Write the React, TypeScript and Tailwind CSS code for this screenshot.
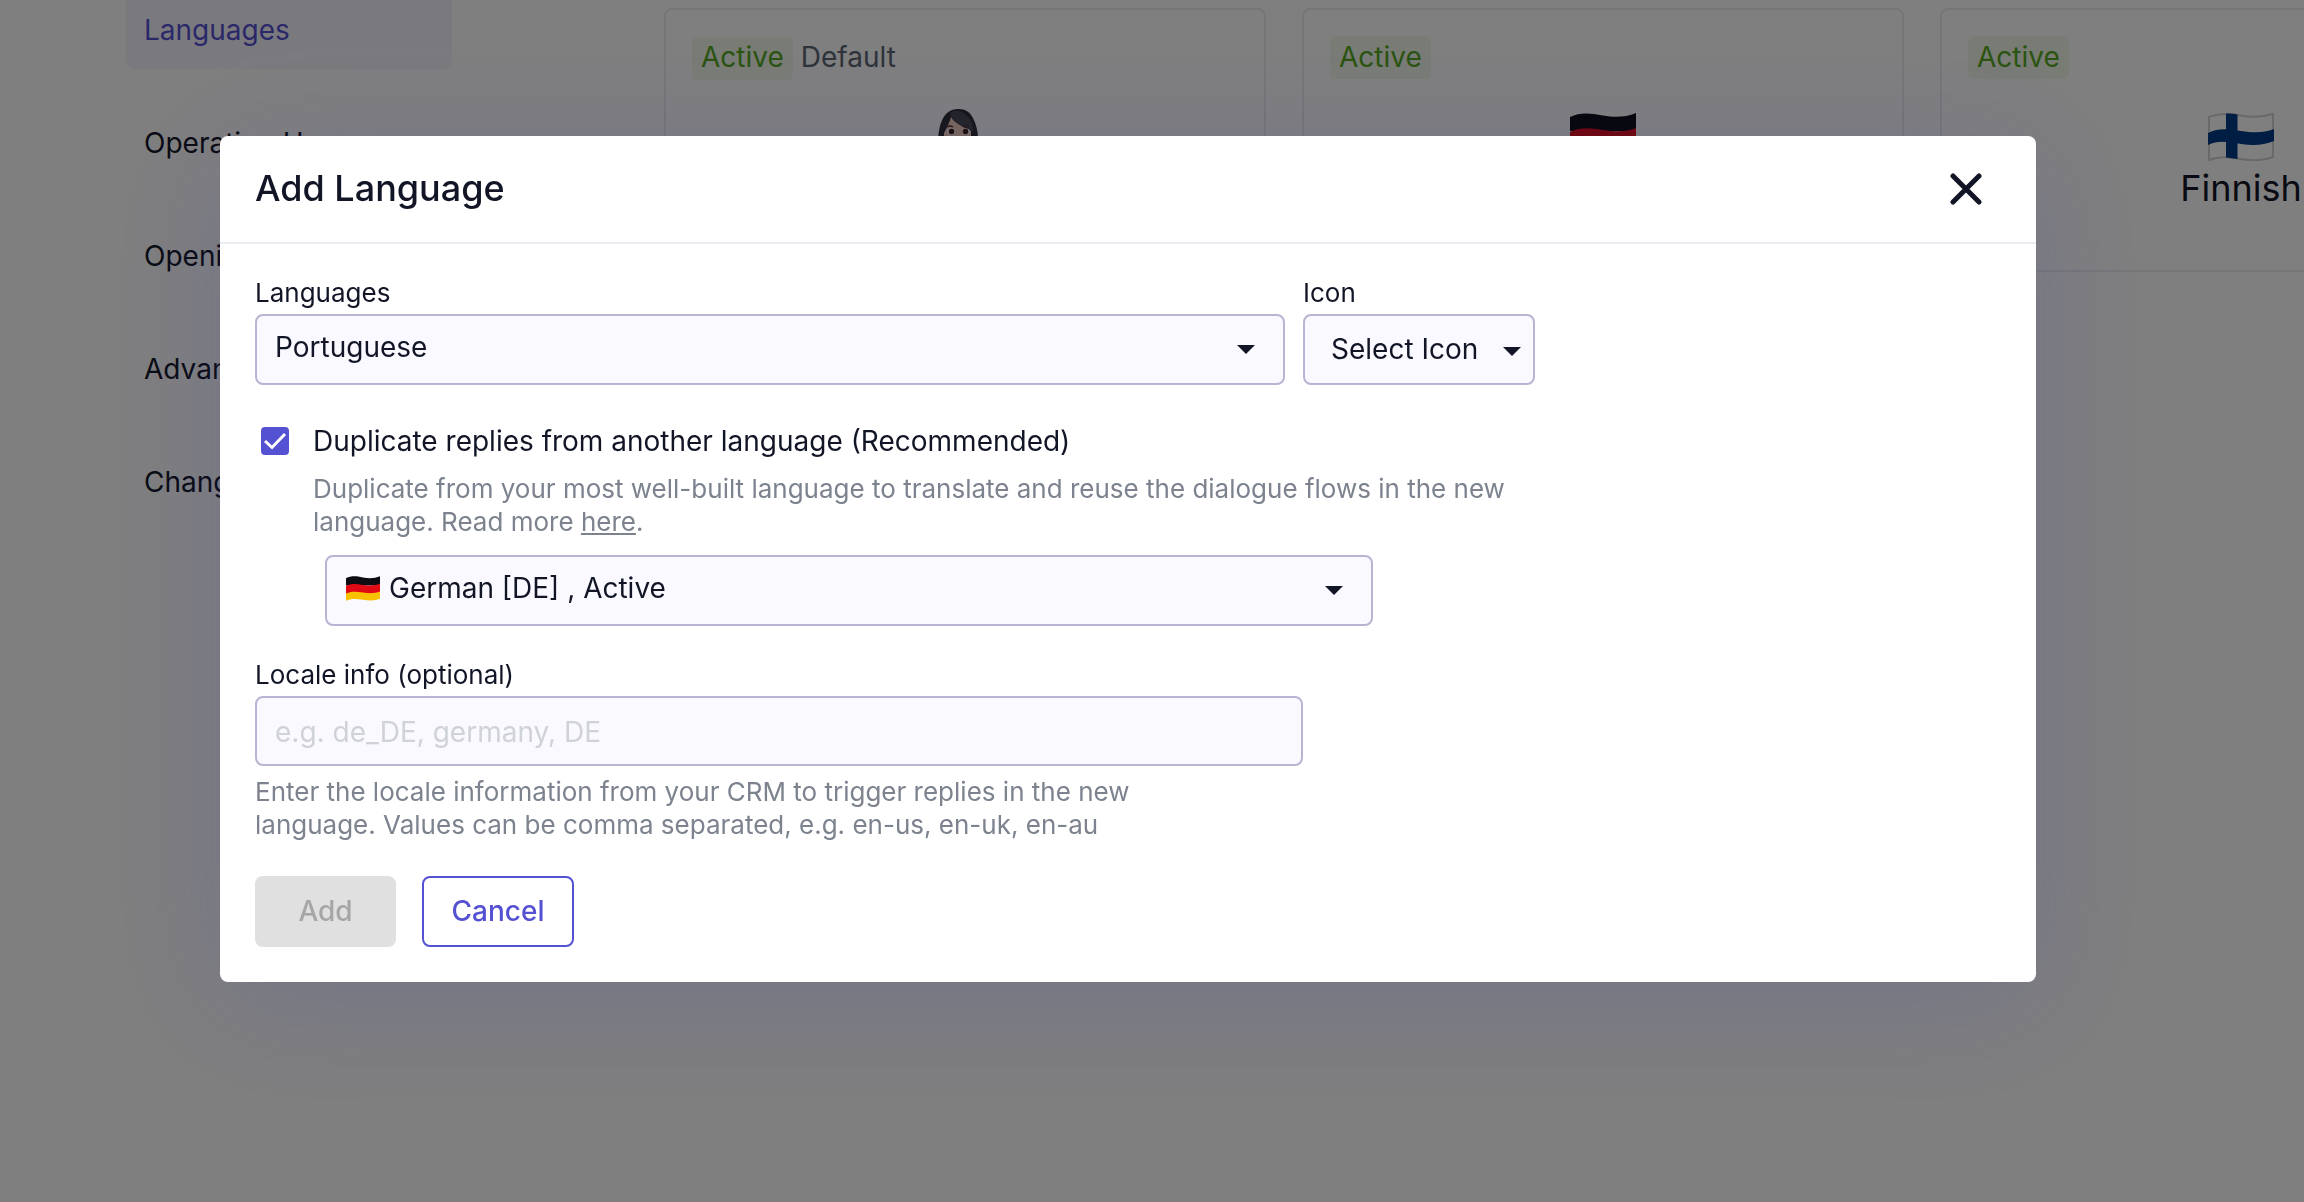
import { useState } from "react";

const NAV_ITEMS = ["Languages", "Operating Hours", "Opening Hours", "Advanced", "Change Log"];

const CARDS = [
    { name: "English", icon: "woman", isDefault: true },
    { name: "German", icon: "de", isDefault: false },
    { name: "Finnish", icon: "fi", isDefault: false },
];

const FIELD = "w-full border-2 border-[#b7b5d3] rounded-lg bg-[#faf9ff] text-[28px] text-[#121526] outline-none";

function GermanFlag({ className }: { className: string }) {
    return (
        <svg viewBox="0 0 66 48" className={className} aria-hidden="true">
            <path d="M0 4C10 -1 20 0 33 2.500S56 4 66 0V18H0Z" fill="#0c0c12" />
            <path d="M0 19C10 14 20 15 33 17S56 19 66 15V34H0Z" fill="#e00a14" />
            <path d="M0 34C10 29 20 30 33 32S56 34 66 30V44C56 48 46 48 33 46S10 43 0 48Z" fill="#f9c100" />
        </svg>
    );
}

function FinnishFlag({ className }: { className: string }) {
    return (
        <svg viewBox="0 0 66 48" className={className} aria-hidden="true">
            <path d="M1 4C11 0 20 0 33 2.500S55 4 65 1V44C55 48 46 48 33 46S11 43 1 47Z" fill="#fff" stroke="#d2d2d2" strokeWidth="2" />
            <path d="M0 20C10 15 20 16 33 18S56 20 66 16V28C56 32 46 33 33 31S10 27 0 32Z" fill="#003a86" />
            <path d="M18 0.500Q24 0 29.500 1.500V46Q24 45 18 44.500Z" fill="#003a86" />
        </svg>
    );
}

function WomanIcon({ className }: { className: string }) {
    return (
        <svg viewBox="0 0 66 56" className={className} aria-hidden="true">
            <path d="M6 56V30C7 18 9 11 14 5C18 1 22 0 27 0C33 0 38 3 41 9C44 15 46 22 46 30V56Z" fill="#2c2b30" />
            <path d="M12 24C14 20 17 15 19 8C22 14 32 18 39 22V30C39 40 33 46 26 46S13 40 12 30Z" fill="#f3cdb4" />
            <path d="M18 4C19 11 27 16 41 22C41 12 36 5 27 2Q22 1 18 4Z" fill="#46464c" />
            <path d="M15 18Q18 16 21 18M31 18Q34 16 37 18" stroke="#4a3329" strokeWidth="1.500" fill="none" />
            <ellipse cx="19" cy="22.500" rx="4" ry="3" fill="#fff" />
            <ellipse cx="34" cy="22.500" rx="4" ry="3" fill="#fff" />
            <circle cx="19.500" cy="22.500" r="2.800" fill="#3a1d14" />
            <circle cx="33.500" cy="22.500" r="2.800" fill="#3a1d14" />
            <path d="M49 30Q53 27 57 29L60 56H50Z" fill="#f3cdb4" />
        </svg>
    );
}

function Caret({ className }: { className: string }) {
    return (
        <svg viewBox="0 0 18 9" className={`absolute w-[18px] h-[9px] pointer-events-none ${className}`} aria-hidden="true">
            <path d="M0 0H18L9 9Z" fill="#121526" />
        </svg>
    );
}

function CardIcon({ icon }: { icon: string }) {
    if (icon === "de") return <GermanFlag className="w-[66px] h-12" />;
    if (icon === "fi") return <FinnishFlag className="w-[66px] h-12" />;
    return <WomanIcon className="w-[66px] h-14 -mt-[5px] -mb-[3px]" />;
}

function SettingsPage() {
    return (
        <div className="flex items-start pl-[126px] h-screen overflow-hidden">
            <nav className="w-[326px] shrink-0 -mt-[9px] flex flex-col gap-[35px] text-[28px]">
                {NAV_ITEMS.map((item, i) => (
                    <a key={item} href="#" className={`h-[78px] px-[18px] flex items-center rounded-lg ${i === 0 ? "bg-[#f5f4fc] text-[#5551d3]" : "text-[#121526]"}`}>
                        {item}
                    </a>
                ))}
            </nav>
            <main className="ml-[212px] mt-2 flex gap-9">
                {CARDS.map(card => (
                    <section key={card.name} className="w-[602px] h-[264px] shrink-0 border-2 border-[#e9edf2] rounded-lg px-[26px] pt-[26px]">
                        <div className="flex items-center gap-2 text-[28px]">
                            <span className="h-[43px] px-[9px] pb-0.5 flex items-center rounded-md bg-[#f2f8eb] text-[#56a822]">Active</span>
                            {card.isDefault && <span className="pb-0.5 text-[#5c6675]">Default</span>}
                        </div>
                        <div className="mt-[34px] flex flex-col items-center">
                            <CardIcon icon={card.icon} />
                            <h2 className="mt-[5px] text-[36px] leading-[44px] text-[#121526]">{card.name}</h2>
                        </div>
                    </section>
                ))}
            </main>
        </div>
    );
}

export default function App() {
    const [language, setLanguage] = useState("Portuguese");
    const [icon, setIcon] = useState("");
    const [duplicate, setDuplicate] = useState(true);
    const [source, setSource] = useState("de");
    const [locale, setLocale] = useState("");

    return (
        <div className="bg-white text-[#121526] font-['Inter',sans-serif]">
            <SettingsPage />

            <div className="fixed inset-0 bg-black/50 flex items-start pt-[136px] pl-[220px] pr-[268px]">
                <div role="dialog" aria-labelledby="dialog-title" className="flex-1 bg-white rounded-lg shadow-[0_20px_120px_rgba(60,60,170,0.18)]">
                    <header className="h-[108px] pl-[35px] pr-[54px] flex items-center justify-between border-b-2 border-[#e9edf2]">
                        <h1 id="dialog-title" className="pb-0.5 text-[36px] font-medium">Add Language</h1>
                        <button type="button" aria-label="Close">
                            <svg viewBox="0 0 32 32" className="w-8 h-8">
                                <path d="M3 3L29 29M29 3L3 29" stroke="#121526" strokeWidth="5" strokeLinecap="round" />
                            </svg>
                        </button>
                    </header>

                    <form onSubmit={e => e.preventDefault()} className="px-[35px] pt-[33px] pb-[35px]">
                        <div className="flex gap-[18px] max-w-[1280px]">
                            <div className="flex-1">
                                <label htmlFor="language" className="block mb-[5px] text-[26px] leading-8">Languages</label>
                                <div className="relative">
                                    <select id="language" value={language} onChange={e => setLanguage(e.target.value)} className={`${FIELD} h-[71px] appearance-none pl-[18px] pb-1.5`}>
                                        <option>Portuguese</option>
                                        <option>Spanish</option>
                                    </select>
                                    <Caret className="right-[30px] top-[31px]" />
                                </div>
                            </div>
                            <div className="w-[232px]">
                                <label htmlFor="icon" className="block mb-[5px] text-[26px] leading-8">Icon</label>
                                <div className="relative">
                                    <select id="icon" value={icon} onChange={e => setIcon(e.target.value)} className={`${FIELD} h-[71px] appearance-none pl-[26px] pb-0.5`}>
                                        <option value="">Select Icon</option>
                                        <option value="pt">Portugal</option>
                                    </select>
                                    <Caret className="right-[14px] top-[33px]" />
                                </div>
                            </div>
                        </div>

                        <div className="mt-[39px] flex items-center pl-1.5">
                            <input
                                id="duplicate"
                                type="checkbox"
                                checked={duplicate}
                                onChange={e => setDuplicate(e.target.checked)}
                                className="peer w-7 h-7 appearance-none rounded-sm border-2 border-[#5551d3] checked:bg-[#5551d3]"
                            />
                            <svg viewBox="0 0 28 28" className="w-7 h-7 -ml-7 pointer-events-none opacity-0 peer-checked:opacity-100" aria-hidden="true">
                                <path d="M4 14L11 20.500L24 7" fill="none" stroke="#fff" strokeWidth="3" />
                            </svg>
                            <label htmlFor="duplicate" className="ml-6 text-[28px] leading-[34px]">Duplicate replies from another language (Recommended)</label>
                        </div>
                        <p className="mt-3.5 ml-[58px] max-w-[1220px] text-[26px] leading-[33px] text-[#7c838e]">
                            Duplicate from your most well-built language to translate and reuse the dialogue flows in the new language. Read more <a href="#" className="underline">here</a>.
                        </p>
                        <div className="relative mt-[17px] ml-[70px] max-w-[1048px]">
                            <select aria-label="Language to duplicate" value={source} onChange={e => setSource(e.target.value)} className={`${FIELD} h-[71px] appearance-none pl-[62px] pb-1.5`}>
                                <option value="de">German [DE] , Active</option>
                                <option value="fi">Finnish [FI] , Active</option>
                            </select>
                            <GermanFlag className="absolute left-[21px] top-[21px] w-[34px] h-[25px] pointer-events-none" />
                            <Caret className="right-[30px] top-[31px]" />
                        </div>

                        <label htmlFor="locale" className="block mt-[33px] mb-[5px] text-[26px] leading-8">Locale info (optional)</label>
                        <input
                            id="locale"
                            type="text"
                            value={locale}
                            onChange={e => setLocale(e.target.value)}
                            placeholder="e.g. de_DE, germany, DE"
                            className={`${FIELD} block h-[70px] max-w-[1048px] px-[18px] pt-0.5 placeholder:text-[#cfd2d6]`}
                        />
                        <p className="mt-[9px] max-w-[900px] text-[26px] leading-[33px] text-[#7c838e]">
                            Enter the locale information from your CRM to trigger replies in the new language. Values can be comma separated, e.g. en-us, en-uk, en-au
                        </p>

                        <div className="mt-[35px] flex gap-[26px] text-[28px] font-medium">
                            <button type="submit" disabled className="w-[141px] h-[71px] pb-0.5 rounded-lg bg-[#e0e0e0] text-[#a6a6a6]">Add</button>
                            <button type="button" className="w-[152px] h-[71px] pb-0.5 rounded-lg border-2 border-[#5551d3] text-[#5551d3]">Cancel</button>
                        </div>
                    </form>
                </div>
            </div>
        </div>
    );
}
